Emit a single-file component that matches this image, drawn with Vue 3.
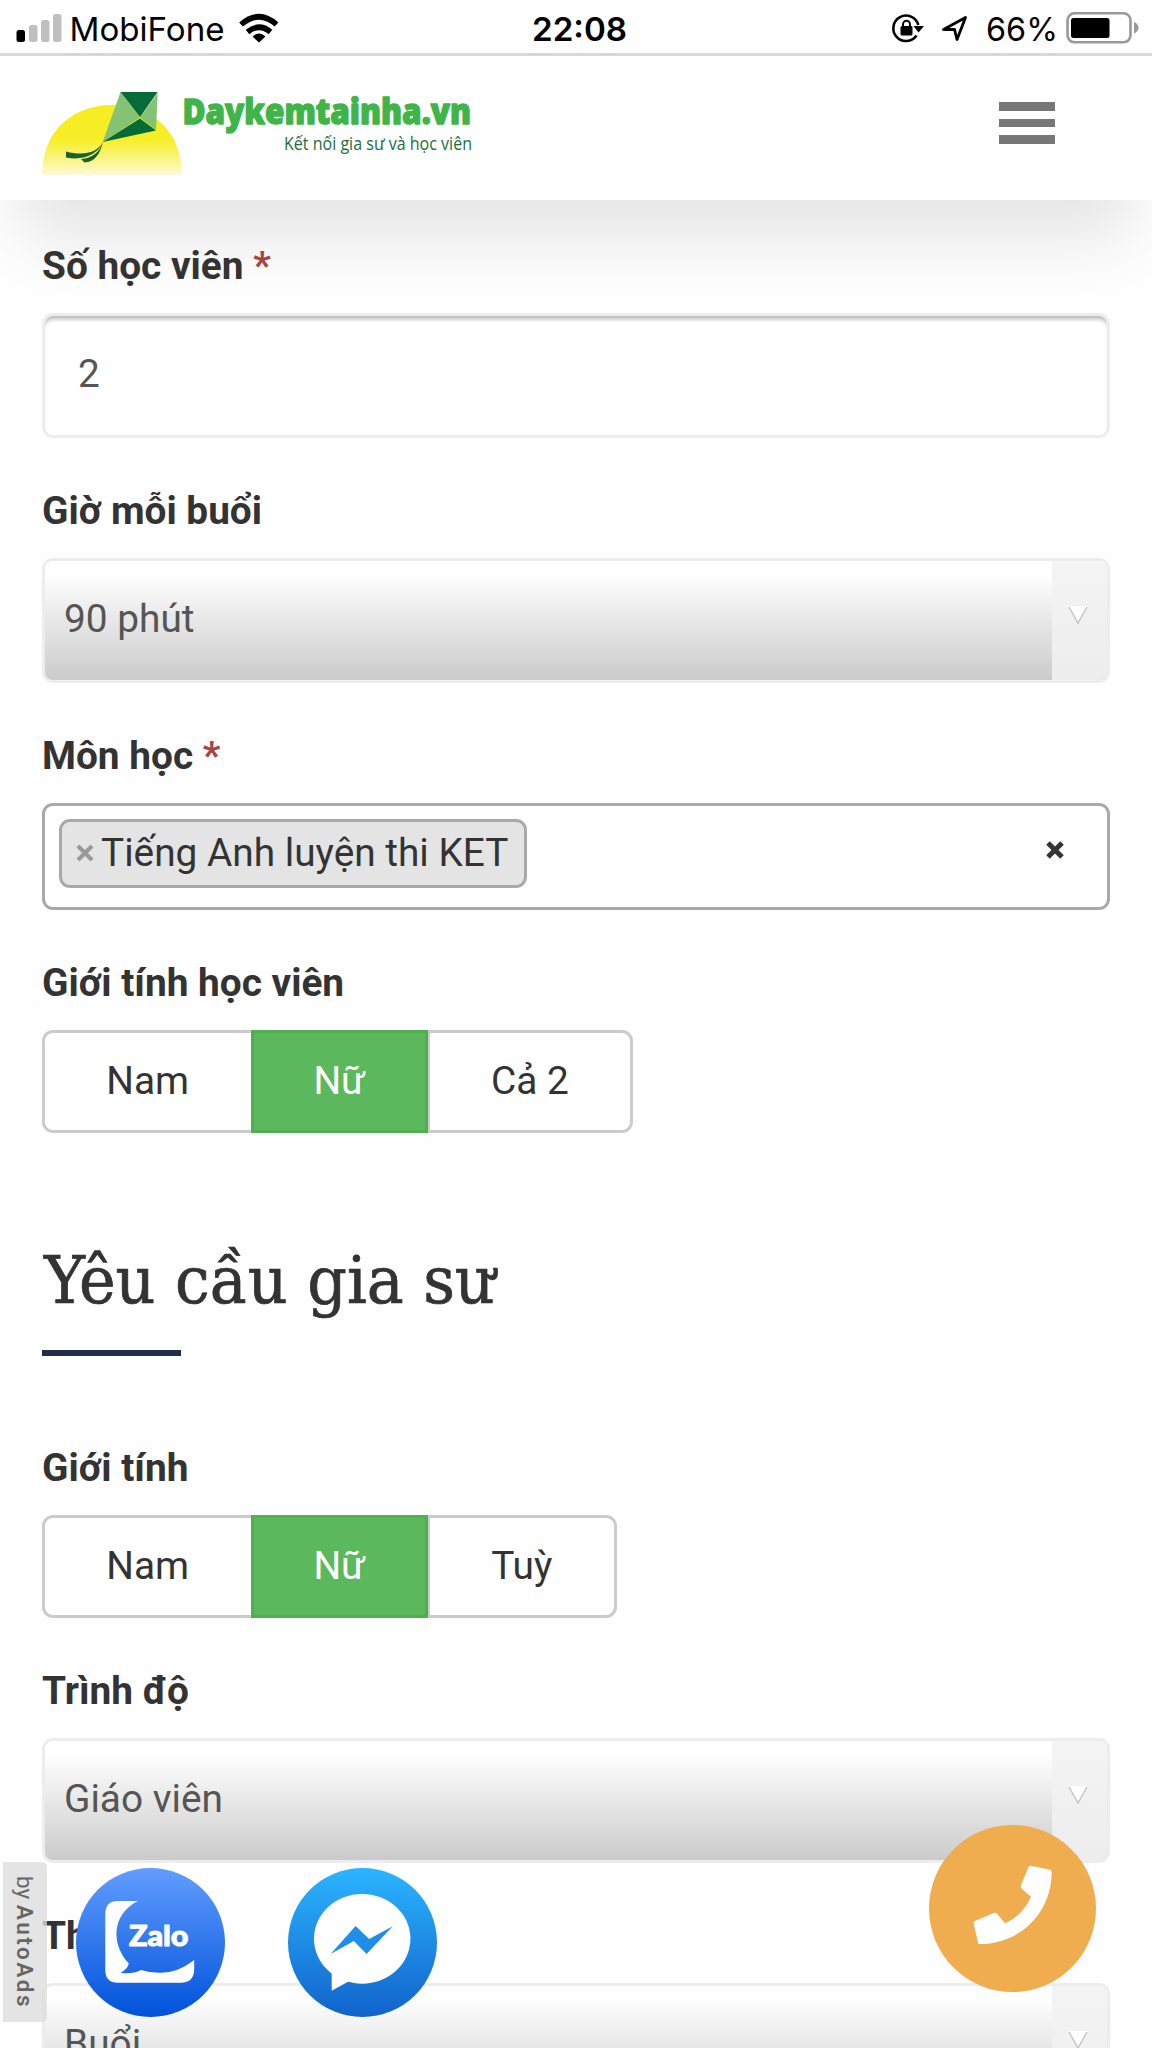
<script setup>
const studentGender = ['Nam', 'Nữ', 'Cả 2']
const tutorGender = ['Nam', 'Nữ', 'Tuỳ']
</script>

<template>
  <div class="page">
    <div class="status">
      <svg width="1152" height="53" viewBox="0 0 1152 53">
        <rect x="16.5" y="30" width="8.5" height="12" rx="2.5" />
        <g fill="#bfbfbf">
          <rect x="29" y="25" width="8.5" height="17" rx="2.5" />
          <rect x="41" y="20" width="8.5" height="22" rx="2.5" />
          <rect x="53" y="14" width="8.5" height="28" rx="2.5" />
        </g>
        <text x="69.500" y="41" class="st" textLength="155" lengthAdjust="spacingAndGlyphs">MobiFone</text>
        <g fill="none" stroke="#000" stroke-width="5.6">
          <path d="M241 24.5 Q259 9 276.500 24.500" />
          <path d="M247.500 32 Q259 22.500 270.500 32" />
        </g>
        <path d="M252.500 36.500 Q259 30.500 265.500 36.500 L259 42.500Z" />
        <text x="532" y="41" class="st time" textLength="95" lengthAdjust="spacingAndGlyphs">22:08</text>
        <path d="M916.500 35.500 A12.700 12.700 0 1 1 918.300 25" fill="none" stroke="#000" stroke-width="2.600" />
        <path d="M913.500 26 H924 L918.500 32.500Z" />
        <rect x="900.500" y="26" width="12" height="9.500" rx="1.500" />
        <path d="M903 27 V24.500 a3.500 3.800 0 0 1 7 0 V27" fill="none" stroke="#000" stroke-width="2" />
        <path d="M943.500 29.500 L965.500 17.500 L957 39.500 L954.500 29.300Z" fill="none" stroke="#000" stroke-width="2.800" stroke-linejoin="round" />
        <text x="986" y="41" class="st" textLength="72" lengthAdjust="spacingAndGlyphs">66%</text>
        <rect x="1067.500" y="13.300" width="63" height="29" rx="7" fill="none" stroke="#999" stroke-width="2.600" />
        <rect x="1071" y="18" width="38.500" height="20" rx="2.500" />
        <path d="M1134 22 Q1138.500 24 1138.500 27.700 Q1138.500 31.500 1134 33.500Z" fill="#999" />
      </svg>
    </div>

    <header class="header">
      <svg class="logo" width="445" height="90" viewBox="40 90 445 90">
        <defs>
          <linearGradient id="sun" x1="0" y1="0" x2="0" y2="1">
            <stop offset="0" stop-color="#f6ec20" />
            <stop offset=".5" stop-color="#f7ee28" />
            <stop offset="1" stop-color="#fdfad0" />
          </linearGradient>
        </defs>
        <path d="M42 174.500 C42 132 72 105 112 105 C152 105 182 132 182 174.500Z" fill="url(#sun)" />
        <path d="M120.500 92 L140 117.500 L102.700 142Z M157.700 93 L156 130 L140 117.500Z" fill="#84c274" />
        <path d="M120.500 92 H157.700 L140 117Z M140 118.500 L156 130.500 L102.700 142Z" fill="#056b39" />
        <path d="M103 142 C97 153 83 156 66 151.500 V157.500 C84 161 98 154 103 142Z M103 142 C99 153 92 158 81 159 L84.500 162.500 C95 162 100 154 103 142Z" fill="#1c6228" />
        <text x="182.500" y="123.500" class="brand" textLength="288.500" lengthAdjust="spacingAndGlyphs">Daykemtainha.vn</text>
        <text x="284" y="149.500" class="tagline" textLength="188" lengthAdjust="spacingAndGlyphs">Kết nối gia sư và học viên</text>
      </svg>
      <div class="menu"><i></i><i></i><i></i></div>
    </header>

    <main class="form">
      <div class="field">
        <label>Số học viên <em>*</em></label>
        <div class="input">2</div>
      </div>
      <div class="field">
        <label>Giờ mỗi buổi</label>
        <div class="select"><span>90 phút</span><b><svg width="20" height="19" viewBox="0 0 20 19"><path d="M0 0H20L10 17Z" fill="#fff" /><path d="M1 1L10 17L19 1" fill="none" stroke="#c4c4c4" stroke-width="1.500" /></svg></b></div>
      </div>
      <div class="field">
        <label>Môn học <em>*</em></label>
        <div class="multi">
          <div class="tag">
            <svg width="18" height="18" viewBox="0 0 18 18"><path d="M2 2L16 16M16 2L2 16" stroke="#999" stroke-width="4.200" /></svg>
            <span>Tiếng Anh luyện thi KET</span>
          </div>
          <svg class="clear" width="18" height="18" viewBox="0 0 18 18"><path d="M2 2L16 16M16 2L2 16" stroke="#333" stroke-width="5" /></svg>
        </div>
      </div>
      <div class="field">
        <label>Giới tính học viên</label>
        <div class="group">
          <div v-for="(g, i) in studentGender" :key="g" class="btn" :class="{ on: i === 1 }">{{ g }}</div>
        </div>
      </div>

      <div class="heading">
        <svg width="480" height="100" viewBox="0 0 480 100">
          <text x="2" y="68.500" class="title" textLength="451" lengthAdjust="spacingAndGlyphs">Yêu cầu gia sư</text>
        </svg>
        <div class="rule"></div>
      </div>

      <div class="field">
        <label>Giới tính</label>
        <div class="group short">
          <div v-for="(g, i) in tutorGender" :key="g" class="btn" :class="{ on: i === 1 }">{{ g }}</div>
        </div>
      </div>
      <div class="field">
        <label>Trình độ</label>
        <div class="select"><span>Giáo viên</span><b><svg width="20" height="19" viewBox="0 0 20 19"><path d="M0 0H20L10 17Z" fill="#fff" /><path d="M1 1L10 17L19 1" fill="none" stroke="#c4c4c4" stroke-width="1.500" /></svg></b></div>
      </div>
      <div class="field">
        <label>Thời gian</label>
        <div class="select"><span>Buổi</span><b><svg width="20" height="19" viewBox="0 0 20 19"><path d="M0 0H20L10 17Z" fill="#fff" /><path d="M1 1L10 17L19 1" fill="none" stroke="#c4c4c4" stroke-width="1.500" /></svg></b></div>
      </div>
    </main>

    <div class="ads"><span>by <b>AutoAds</b></span></div>

    <svg class="zalo" width="149" height="149" viewBox="0 0 149 149">
      <defs>
        <linearGradient id="zg" x1="0" y1="0" x2="0" y2="1">
          <stop offset="0" stop-color="#629dff" />
          <stop offset="1" stop-color="#0052da" />
        </linearGradient>
      </defs>
      <circle cx="74.500" cy="74.500" r="74.500" fill="url(#zg)" />
      <path d="M62 33H42Q29.300 33 29.300 46V102Q29.300 114.700 42 114.700H105Q118.200 114.700 118.200 101V92Q101 105.500 83 104.700Q73 104.500 65 102Q56 106.500 44.700 104.700Q52 101 52.800 95.300C36 78 34 47 62 33Z" fill="#fff" />
      <text x="53" y="77.500" class="zt" textLength="59.500" lengthAdjust="spacingAndGlyphs">Zalo</text>
    </svg>

    <svg class="messenger" width="149" height="149" viewBox="0 0 149 149">
      <defs>
        <linearGradient id="mg" x1="0" y1="0" x2="0" y2="1">
          <stop offset="0" stop-color="#2bb5ff" />
          <stop offset="1" stop-color="#1163cb" />
        </linearGradient>
      </defs>
      <circle cx="74.500" cy="74.500" r="74.500" fill="url(#mg)" />
      <ellipse cx="74.200" cy="70.800" rx="48.200" ry="44.900" fill="#fff" />
      <path d="M43.700 100V122.700L60.500 113.500L66 106Z" fill="#fff" />
      <path d="M42.600 86L67.600 58L81.200 71L104.700 58.300L78.600 86L65.800 73Z" fill="#1f8ee8" />
    </svg>

    <svg class="phone" width="167" height="167" viewBox="388 375 501 501">
      <circle cx="638.500" cy="625.500" r="250.500" fill="#efad4f" />
      <path d="M692 497L752 509Q756 511 756 516C756 640 660 732 540 732Q536 732 535 728L522 670Q521 665 526 663L582 639Q588 637 592 641L616 670C650 655 680 625 694 590L666 566Q662 562 664 556L687 500Q689 497 692 497Z" fill="#fff" />
    </svg>
  </div>
</template>

<style>
body {
  margin: 0;
  background: #fff;
}
</style>

<style scoped>
.page {
  position: relative;
  width: 1152px;
  height: 2048px;
  overflow: hidden;
  background: #fefefe;
  color: #333;
  font: 38.800px/56px Roboto, "Liberation Sans", sans-serif;
}
.page * {
  box-sizing: border-box;
}
svg {
  display: block;
  flex: none;
  overflow: visible;
}
.status {
  height: 56px;
  border-bottom: 3px solid #d8d8d8;
  background: #fff;
}
.st {
  font: 400 33px Inter, sans-serif;
}
.time {
  font-weight: 600;
}
.header {
  display: flex;
  justify-content: space-between;
  align-items: flex-start;
  height: 144px;
  padding: 34px 97px 0 40px;
  background: #fff;
  box-shadow: 0 58px 66px -20px rgba(0, 0, 0, 0.1);
}
.brand {
  font: 800 35.500px "Open Sans", sans-serif;
  fill: #3fb549;
  stroke: #3fb549;
  stroke-width: 1.4;
  stroke-linejoin: round;
}
.tagline {
  font: 400 17.5px "Open Sans", sans-serif;
  fill: #1d6c42;
}
.menu {
  display: flex;
  flex-direction: column;
  gap: 8px;
  width: 56px;
  margin-top: 12px;
}
.menu i {
  height: 8.700px;
  background: #777;
}
.form {
  padding: 38px 42px 0;
}
.field {
  margin-bottom: 45px;
}
label {
  display: block;
  height: 75px;
  font-weight: 700;
}
em {
  color: #a94442;
  font-style: normal;
}
.input {
  height: 124.500px;
  padding: 29.500px 33px;
  border: 3px solid #ededed;
  border-radius: 11px;
  background: #fff;
  box-shadow: inset 0 5px 4px -2px #b8b8b8;
  color: #555;
}
.select {
  display: flex;
  height: 125px;
  border: 3px solid #ededed;
  border-radius: 11px;
  overflow: hidden;
  background: linear-gradient(#fff 0%, #fff 10%, #cbcbcb 100%);
  color: #555;
}
.select span {
  flex: 1;
  padding: 30px 19px;
}
.select b {
  width: 55.500px;
  padding: 45px 0 0 16px;
  background: linear-gradient(#f4f4f4, #ededed);
}
.multi {
  display: flex;
  justify-content: space-between;
  align-items: flex-start;
  height: 107px;
  padding: 13px 43.500px 0 13.500px;
  border: 3px solid #a9a9a9;
  border-radius: 11px;
  background: #fff;
}
.tag {
  display: flex;
  align-items: center;
  gap: 7px;
  width: 468px;
  height: 69px;
  padding-left: 14.500px;
  border: 3px solid #a9a9a9;
  border-radius: 11px;
  background: #e4e4e4;
  white-space: nowrap;
}
.clear {
  margin-top: 22px;
}
.group {
  display: grid;
  grid-template-columns: 208.500px 177.500px 205px;
  height: 103px;
}
.short {
  grid-template-columns: 208.500px 177.500px 188.500px;
}
.btn {
  border: 3px solid #cbcbcb;
  background: #fff;
  line-height: 96px;
  text-align: center;
}
.btn:first-child {
  border-right: 0;
  border-radius: 11px 0 0 11px;
}
.btn:last-child {
  border-left-width: 2px;
  border-radius: 0 11px 11px 0;
}
.btn.on {
  border-color: #4fb050;
  background: #5cb85c;
  color: #fff;
}
.heading {
  height: 262px;
  padding-top: 56px;
}
.title {
  font: 400 64.500px "DejaVu Serif Condensed", "DejaVu Serif", serif;
  fill: #333;
  stroke: #333;
  stroke-width: 0.7;
}
.rule {
  width: 139px;
  height: 6px;
  margin-top: 16px;
  background: #1f2d47;
}
.ads {
  position: absolute;
  left: 3px;
  top: 1862px;
  display: flex;
  align-items: center;
  justify-content: center;
  width: 44px;
  height: 160px;
  border-radius: 0 5px 5px 0;
  background: rgba(220, 220, 220, 0.78);
  color: #666;
  font-size: 22.500px;
  line-height: 44px;
  white-space: nowrap;
  writing-mode: vertical-rl;
}
.ads b {
  font-weight: 600;
  letter-spacing: 2.500px;
}
.zalo {
  position: absolute;
  left: 76px;
  top: 1868px;
}
.zt {
  font: 900 29px Lato, sans-serif;
  fill: #fff;
  stroke: #fff;
  stroke-width: 1;
  stroke-linejoin: round;
}
.messenger {
  position: absolute;
  left: 288px;
  top: 1868px;
}
.phone {
  position: absolute;
  left: 929px;
  top: 1825px;
}
</style>
